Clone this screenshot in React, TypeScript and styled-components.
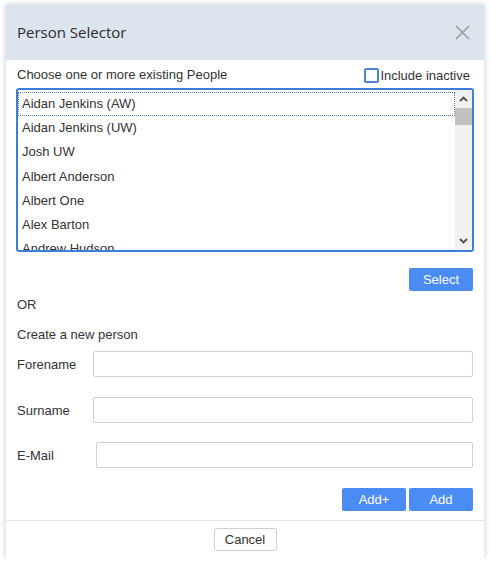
import * as React from 'react';
import styled, { createGlobalStyle } from 'styled-components';

const people = [
  'Aidan Jenkins (AW)',
  'Aidan Jenkins (UW)',
  'Josh UW',
  'Albert Anderson',
  'Albert One',
  'Alex Barton',
  'Andrew Hudson',
];

const fields = [
  { label: 'Forename', labelWidth: 76, gap: 8 },
  { label: 'Surname', labelWidth: 76, gap: 20 },
  { label: 'E-Mail', labelWidth: 79, gap: 19 },
];

const PersonSelector = () => {
  return (
    <>
      <GlobalStyle />
      <Dialog>
        <Header>
          <Title>Person Selector</Title>
          <CloseButton aria-label="Close">
            <svg width="15" height="15" viewBox="0 0 15 15">
              <path d="M1 1L14 14M14 1L1 14" stroke="#9a9a9a" strokeWidth="1.6" fill="none" />
            </svg>
          </CloseButton>
        </Header>

        <Body>
          <TopRow>
            <Text>Choose one or more existing People</Text>
            <CheckLabel>
              <CheckBox />
              Include inactive
            </CheckLabel>
          </TopRow>

          <ListBox>
            <ListItems>
              {people.map((name, i) => (
                <ListItem key={name} $focused={i === 0}>
                  {name}
                </ListItem>
              ))}
            </ListItems>
            <ScrollBar>
              <ScrollArrow>
                <svg width="9" height="6" viewBox="0 0 9 6">
                  <path d="M1 5L4.5 1.5L8 5" stroke="#505050" strokeWidth="1.8" fill="none" />
                </svg>
              </ScrollArrow>
              <Thumb />
              <Track />
              <ScrollArrow>
                <svg width="9" height="6" viewBox="0 0 9 6">
                  <path d="M1 1L4.5 4.5L8 1" stroke="#505050" strokeWidth="1.8" fill="none" />
                </svg>
              </ScrollArrow>
            </ScrollBar>
          </ListBox>

          <ButtonRow $top={16}>
            <PrimaryButton>Select</PrimaryButton>
          </ButtonRow>

          <Text $top={6}>OR</Text>
          <Text $top={14}>Create a new person</Text>

          {fields.map((f) => (
            <FieldRow key={f.label} $top={f.gap}>
              <FieldLabel $width={f.labelWidth}>{f.label}</FieldLabel>
              <Input type="text" />
            </FieldRow>
          ))}

          <ButtonRow $top={20}>
            <PrimaryButton>Add+</PrimaryButton>
            <PrimaryButton>Add</PrimaryButton>
          </ButtonRow>
        </Body>

        <Footer>
          <SecondaryButton>Cancel</SecondaryButton>
        </Footer>
      </Dialog>
    </>
  );
};

const GlobalStyle = createGlobalStyle`
  html, body {
    margin: 0;
    padding: 0;
    background: #ffffff;
  }
  body {
    font-family: "Liberation Sans", Arial, sans-serif;
    font-size: 13px;
    color: #333;
  }
  * {
    box-sizing: border-box;
  }
`;

const Dialog = styled.div`
  width: 478px;
  margin: 4px 0 0 6px;
  background: #fff;
  box-shadow: 0 1px 6px rgba(0, 0, 0, 0.22);
  display: flex;
  flex-direction: column;
`;

const Header = styled.div`
  height: 56px;
  background: #dce5ee;
  display: flex;
  align-items: center;
  justify-content: space-between;
  padding: 0 14px 0 11px;
`;

const Title = styled.h1`
  margin: 0;
  font-family: "Open Sans", "Noto Sans", sans-serif;
  font-weight: 400;
  font-size: 15px;
  color: #2b2b2b;
`;

const CloseButton = styled.button`
  border: 0;
  padding: 0;
  background: transparent;
  display: flex;
  cursor: pointer;
`;

const Body = styled.div`
  padding: 0 10px 9px;
  display: flex;
  flex-direction: column;
`;

const TopRow = styled.div`
  margin-top: 6px;
  height: 18px;
  display: flex;
  align-items: center;
  justify-content: space-between;
`;

const Text = styled.div<{ $top?: number }>`
  margin-top: ${(p) => p.$top ?? 0}px;
  padding-left: 1px;
  line-height: 16px;
  font-size: 13px;
  color: #333;
`;

const CheckLabel = styled.label`
  display: flex;
  align-items: center;
  font-size: 13px;
  color: #333;
  padding-right: 4px;
`;

const CheckBox = styled.span`
  width: 15px;
  height: 15px;
  border: 2px solid #4f82d9;
  border-radius: 2px;
  margin-right: 1px;
`;

const ListBox = styled.div`
  margin-top: 4px;
  height: 164px;
  border: 2px solid #3d7ddc;
  border-radius: 3px;
  display: flex;
  overflow: hidden;
`;

const ListItems = styled.div`
  flex: 1;
  padding-top: 2px;
  overflow: hidden;
`;

const ListItem = styled.div<{ $focused?: boolean }>`
  height: 24.2px;
  line-height: 24px;
  padding-left: 4px;
  font-size: 13px;
  color: #333;
  white-space: nowrap;
  outline: ${(p) => (p.$focused ? '1px dotted #4a7fb0' : 'none')};
  outline-offset: -1px;
`;

const ScrollBar = styled.div`
  width: 17px;
  background: #f1f1f1;
  display: flex;
  flex-direction: column;
`;

const ScrollArrow = styled.div`
  height: 18px;
  display: flex;
  align-items: center;
  justify-content: center;
`;

const Thumb = styled.div`
  height: 17px;
  background: #c1c1c1;
`;

const Track = styled.div`
  flex: 1;
`;

const ButtonRow = styled.div<{ $top: number }>`
  margin-top: ${(p) => p.$top}px;
  display: flex;
  justify-content: flex-end;
  gap: 3px;
  padding-right: 1px;
`;

const PrimaryButton = styled.button`
  width: 64px;
  height: 23px;
  border: 0;
  border-radius: 2px;
  background: #4a8bf4;
  color: #fff;
  font-family: "Liberation Sans", Arial, sans-serif;
  font-size: 13px;
  padding: 0;
`;

const SecondaryButton = styled.button`
  width: 63px;
  height: 23px;
  border: 1px solid #d0d0d0;
  border-radius: 2px;
  background: #fff;
  color: #333;
  font-family: "Liberation Sans", Arial, sans-serif;
  font-size: 13px;
  padding: 0;
`;

const FieldRow = styled.div<{ $top: number }>`
  margin-top: ${(p) => p.$top}px;
  display: flex;
  align-items: center;
  padding-left: 1px;
  padding-right: 1px;
`;

const FieldLabel = styled.label<{ $width: number }>`
  width: ${(p) => p.$width}px;
  flex-shrink: 0;
  font-size: 13px;
  color: #333;
`;

const Input = styled.input`
  flex: 1;
  height: 26px;
  border: 1px solid #cfcfcf;
  border-radius: 2px;
  background: #fff;
  outline: none;
`;

const Footer = styled.div`
  border-top: 1px solid #e3e3e3;
  padding: 7px 0 7px;
  display: flex;
  justify-content: center;
`;

export default PersonSelector;
